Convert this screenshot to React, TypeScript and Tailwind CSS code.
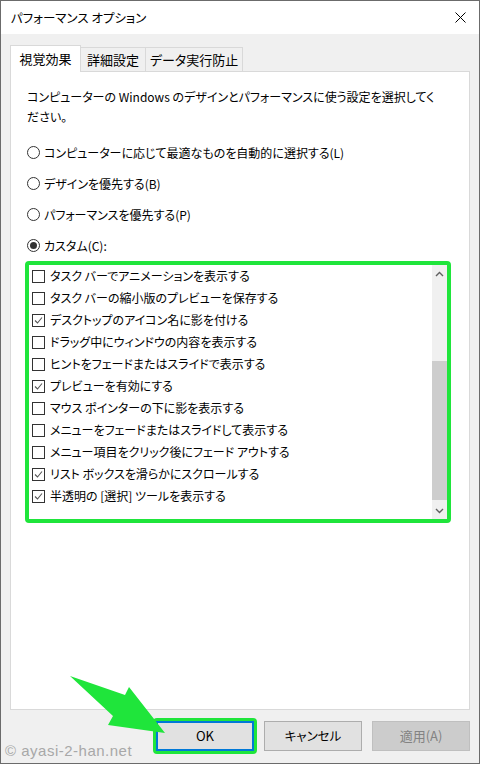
import React from 'react';

const radios = [
  { label: 'コンピューターに応じて最適なものを自動的に選択する(L)', selected: false },
  { label: 'デザインを優先する(B)', selected: false },
  { label: 'パフォーマンスを優先する(P)', selected: false },
  { label: 'カスタム(C):', selected: true },
];

const effects = [
  { label: 'タスク バーでアニメーションを表示する', checked: false },
  { label: 'タスク バーの縮小版のプレビューを保存する', checked: false },
  { label: 'デスクトップのアイコン名に影を付ける', checked: true },
  { label: 'ドラッグ中にウィンドウの内容を表示する', checked: false },
  { label: 'ヒントをフェードまたはスライドで表示する', checked: false },
  { label: 'プレビューを有効にする', checked: true },
  { label: 'マウス ポインターの下に影を表示する', checked: false },
  { label: 'メニューをフェードまたはスライドして表示する', checked: false },
  { label: 'メニュー項目をクリック後にフェード アウトする', checked: false },
  { label: 'リスト ボックスを滑らかにスクロールする', checked: true },
  { label: '半透明の [選択] ツールを表示する', checked: true },
];

function Radio({ selected }: { selected: boolean }) {
  return (
    <span className="w-[13px] h-[13px] rounded-full border border-[#333333] bg-white flex items-center justify-center shrink-0">
      {selected && <span className="w-[7px] h-[7px] rounded-full bg-[#333333]" />}
    </span>
  );
}

function Checkbox({ checked }: { checked: boolean }) {
  return (
    <span className="w-[13px] h-[13px] border border-[#333333] bg-white flex items-center justify-center shrink-0">
      {checked && (
        <svg width="11" height="11" viewBox="0 0 11 11">
          <path d="M2 5.5 L4.5 8 L9 2.5" fill="none" stroke="#555555" strokeWidth="1.1" />
        </svg>
      )}
    </span>
  );
}

export default function App() {
  return (
    <div className="relative w-[480px] h-[764px] overflow-hidden border border-[#6b6b6b] bg-[#f0f0f0] flex flex-col text-black font-['Noto_Sans_CJK_JP','Noto_Sans',sans-serif] [font-feature-settings:'palt']">
      {/* title bar */}
      <div className="h-[33px] bg-white flex items-center justify-between pl-[10px] pr-[13px]">
        <span className="text-[12.5px] leading-[20px]">パフォーマンス オプション</span>
        <svg width="11" height="11" viewBox="0 0 11 11">
          <path d="M0.5 0.5 L10.5 10.5 M10.5 0.5 L0.5 10.5" stroke="#000" strokeWidth="1" />
        </svg>
      </div>

      <div className="flex-1 flex flex-col px-[9px] pt-[11px]">
        {/* tabs */}
        <div className="flex items-end h-[27px] -mb-[1px] relative z-10 text-[13px]">
          <div className="w-[71px] h-[27px] bg-white border border-b-0 border-[#d9d9d9] flex items-center justify-center">
            視覚効果
          </div>
          <div className="w-[65px] h-[25px] border-t border-r border-b border-[#d9d9d9] flex items-center justify-center">
            詳細設定
          </div>
          <div className="w-[97px] h-[25px] border-t border-r border-b border-[#d9d9d9] flex items-center justify-center">
            データ実行防止
          </div>
        </div>

        {/* panel */}
        <div className="h-[639px] bg-white border border-[#d9d9d9] pt-[15px] pl-[16px] text-[12px]">
          <p className="leading-[20px] whitespace-nowrap">
            コンピューターの Windows のデザインとパフォーマンスに使う設定を選択してく
            <br />
            ださい。
          </p>

          <div className="mt-[10px] flex flex-col">
            {radios.map((r) => (
              <div key={r.label} className="h-[31px] flex items-center gap-[4px] whitespace-nowrap">
                <Radio selected={r.selected} />
                <span>{r.label}</span>
              </div>
            ))}
          </div>

          <div className="-ml-[2px] w-[426px] h-[262px] border-[4px] border-[#1fe53b] rounded-[4px] flex bg-white">
            <div className="flex-1 flex flex-col pl-[3px]">
              {effects.map((e) => (
                <div key={e.label} className="h-[22px] flex items-center gap-[5px] whitespace-nowrap">
                  <Checkbox checked={e.checked} />
                  <span>{e.label}</span>
                </div>
              ))}
            </div>
            <div className="w-[15px] flex flex-col bg-[#f0f0f0]">
              <div className="h-[17px] flex items-center justify-center">
                <svg width="9" height="6" viewBox="0 0 9 6">
                  <path d="M1 5 L4.5 1.5 L8 5" fill="none" stroke="#606060" strokeWidth="1.4" />
                </svg>
              </div>
              <div className="flex-1 flex flex-col">
                <div className="h-[79px]" />
                <div className="h-[139px] bg-[#cdcdcd]" />
              </div>
              <div className="h-[17px] flex items-center justify-center">
                <svg width="9" height="6" viewBox="0 0 9 6">
                  <path d="M1 1 L4.5 4.5 L8 1" fill="none" stroke="#606060" strokeWidth="1.4" />
                </svg>
              </div>
            </div>
          </div>
        </div>

        {/* buttons */}
        <div className="mt-[7px] h-[38px] flex items-center justify-end text-[13px]">
          <div className="border-[3px] border-[#1fe53b] rounded-[4px]">
            <button className="w-[98px] h-[30px] border-2 border-[#0078d7] bg-[#e1e1e1] flex items-center justify-center">
              OK
            </button>
          </div>
          <button className="ml-[7px] w-[98px] h-[30px] border border-[#adadad] bg-[#e1e1e1] flex items-center justify-center text-[12.5px]">
            キャンセル
          </button>
          <button className="ml-[10px] w-[98px] h-[30px] border border-[#bfbfbf] bg-[#cccccc] text-[#838383] flex items-center justify-center">
            適用(A)
          </button>
        </div>
      </div>

      {/* annotation arrow */}
      <svg className="absolute left-0 top-0 pointer-events-none" width="480" height="764" viewBox="0 0 480 764">
        <polygon points="69,675 124,694 128,686 164,732 107,724 112,715" fill="#1fe53b" />
      </svg>

      {/* watermark */}
      <span className="absolute left-[4px] top-[740px] text-[15px] leading-[20px] tracking-[0.5px] text-[#a8a8a8] font-['Liberation_Sans',sans-serif]">
        © ayasi-2-han.net
      </span>
    </div>
  );
}
